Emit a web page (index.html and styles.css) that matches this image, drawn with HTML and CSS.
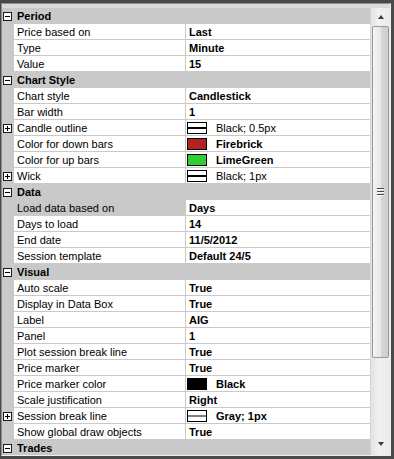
FILE: index.html
```html
<!DOCTYPE html>
<html>
<head>
<meta charset="utf-8">
<link rel="stylesheet" href="styles.css">
</head>
<body>
<div class="window">
  <div class="inner">
    <div class="grid">
      <div class="row cat"><span class="gutter"><span class="box minus"></span></span><span class="catname">Period</span></div>
      <div class="row"><span class="gutter"></span><span class="name">Price based on</span><span class="value">Last</span></div>
      <div class="row"><span class="gutter"></span><span class="name">Type</span><span class="value">Minute</span></div>
      <div class="row"><span class="gutter"></span><span class="name">Value</span><span class="value">15</span></div>

      <div class="row cat"><span class="gutter"><span class="box minus"></span></span><span class="catname">Chart Style</span></div>
      <div class="row"><span class="gutter"></span><span class="name">Chart style</span><span class="value">Candlestick</span></div>
      <div class="row"><span class="gutter"></span><span class="name">Bar width</span><span class="value">1</span></div>
      <div class="row"><span class="gutter"><span class="box plus"></span></span><span class="name">Candle outline</span><span class="value swv"><span class="swatch stroke"></span><span class="regular">Black; 0.5px</span></span></div>
      <div class="row"><span class="gutter"></span><span class="name">Color for down bars</span><span class="value swv"><span class="swatch firebrick"></span>Firebrick</span></div>
      <div class="row"><span class="gutter"></span><span class="name">Color for up bars</span><span class="value swv"><span class="swatch limegreen"></span>LimeGreen</span></div>
      <div class="row"><span class="gutter"><span class="box plus"></span></span><span class="name">Wick</span><span class="value swv"><span class="swatch stroke"></span><span class="regular">Black; 1px</span></span></div>

      <div class="row cat"><span class="gutter"><span class="box minus"></span></span><span class="catname">Data</span></div>
      <div class="row selected"><span class="gutter"></span><span class="name">Load data based on</span><span class="value">Days</span></div>
      <div class="row"><span class="gutter"></span><span class="name">Days to load</span><span class="value">14</span></div>
      <div class="row"><span class="gutter"></span><span class="name">End date</span><span class="value">11/5/2012</span></div>
      <div class="row"><span class="gutter"></span><span class="name">Session template</span><span class="value">Default 24/5</span></div>

      <div class="row cat"><span class="gutter"><span class="box minus"></span></span><span class="catname">Visual</span></div>
      <div class="row"><span class="gutter"></span><span class="name">Auto scale</span><span class="value">True</span></div>
      <div class="row"><span class="gutter"></span><span class="name">Display in Data Box</span><span class="value">True</span></div>
      <div class="row"><span class="gutter"></span><span class="name">Label</span><span class="value">AIG</span></div>
      <div class="row"><span class="gutter"></span><span class="name">Panel</span><span class="value">1</span></div>
      <div class="row"><span class="gutter"></span><span class="name">Plot session break line</span><span class="value">True</span></div>
      <div class="row"><span class="gutter"></span><span class="name">Price marker</span><span class="value">True</span></div>
      <div class="row"><span class="gutter"></span><span class="name">Price marker color</span><span class="value swv"><span class="swatch black"></span>Black</span></div>
      <div class="row"><span class="gutter"></span><span class="name">Scale justification</span><span class="value">Right</span></div>
      <div class="row"><span class="gutter"><span class="box plus"></span></span><span class="name">Session break line</span><span class="value swv"><span class="swatch stroke gray"></span>Gray; 1px</span></div>
      <div class="row"><span class="gutter"></span><span class="name">Show global draw objects</span><span class="value">True</span></div>

      <div class="row cat"><span class="gutter"><span class="box minus"></span></span><span class="catname">Trades</span></div>
    </div>
    <div class="scroll">
      <div class="btn"><span class="arrow up"></span></div>
      <div class="thumb"><span class="grip"></span></div>
      <div class="track"></div>
      <div class="btn down-btn"><span class="arrow down"></span></div>
    </div>
  </div>
</div>
</body>
</html>
```

FILE: styles.css
```css
html, body {
  margin: 0;
  padding: 0;
  background: #ffffff;
}

.window {
  width: 394px;
  height: 459px;
  box-sizing: border-box;
  border-style: solid;
  border-color: #4a4a4a;
  border-width: 3px 3px 3px 1px;
  overflow: hidden;
}

.inner {
  height: 100%;
  box-sizing: border-box;
  border-style: solid;
  border-width: 1px;
  border-color: #8e8e8e #eeeeee #eeeeee #8e8e8e;
  padding-top: 4px;
  background: #dadada;
  display: flex;
  font-family: "Liberation Sans", Arial, sans-serif;
  font-size: 11px;
  color: #000;
}

.grid {
  width: 368px;
  height: 447px;
  overflow: hidden;
  background: #ffffff;
}

.row {
  display: grid;
  grid-template-columns: 12px 171px 1fr;
  height: 16px;
  box-sizing: border-box;
  border-bottom: 1px solid #c9c9c9;
  white-space: nowrap;
}

.name, .value, .catname {
  line-height: 17px;
  height: 15px;
  overflow: hidden;
}

.gutter {
  background: #c9c9c9;
  position: relative;
}

.name {
  padding-left: 3px;
  background: #ffffff;
}

.selected .name {
  background: #c9c9c9;
}

.value {
  border-left: 1px solid #c9c9c9;
  padding-left: 3px;
  font-weight: bold;
}

.swv {
  padding-left: 1px;
  display: flex;
  align-items: center;
  line-height: 15px;
  padding-top: 1px;
  box-sizing: border-box;
}

.regular {
  font-weight: normal;
}

.cat {
  background: #c9c9c9;
}

.catname {
  grid-column: 2 / 4;
  padding-left: 3px;
  font-weight: bold;
}

.box {
  position: absolute;
  left: 1px;
  top: 4px;
  width: 9px;
  height: 9px;
  box-sizing: border-box;
  border: 1px solid #1a1a1a;
  background: #ffffff;
}

.box::before {
  content: "";
  position: absolute;
  left: 1px;
  top: 3px;
  width: 5px;
  height: 1px;
  background: #000;
}

.box.plus::after {
  content: "";
  position: absolute;
  left: 3px;
  top: 1px;
  width: 1px;
  height: 5px;
  background: #000;
}

.swatch {
  display: inline-block;
  width: 20px;
  height: 12px;
  box-sizing: border-box;
  border: 1px solid #000;
  margin-right: 9px;
  margin-top: -1px;
  flex: none;
  position: relative;
}

.firebrick { background: #b22222; }
.limegreen { background: #32cd32; }
.black { background: #000000; }

.stroke {
  background: #ffffff;
}

.stroke::after {
  content: "";
  position: absolute;
  left: 0;
  right: 0;
  top: 4px;
  height: 2px;
  background: #000;
}

.stroke.gray::after {
  background: #808080;
}

.scroll {
  width: 20px;
  height: 447px;
  box-sizing: border-box;
  border-left: 1px solid #d6d6d6;
  background: linear-gradient(to right, #e2e2e2, #f1f1f1 40%, #ececec);
  display: flex;
  flex-direction: column;
}

.btn {
  height: 17px;
  flex: none;
  display: flex;
  align-items: center;
  justify-content: center;
}

.down-btn {
  margin-bottom: 3px;
}

.arrow {
  width: 0;
  height: 0;
  border-left: 3.5px solid transparent;
  border-right: 3.5px solid transparent;
}

.arrow.up {
  border-bottom: 4px solid #3c3c3c;
}

.arrow.down {
  border-top: 4px solid #3c3c3c;
}

.thumb {
  height: 332px;
  margin: 1px 1px 0 1px;
  flex: none;
  box-sizing: border-box;
  border: 1px solid #979797;
  border-radius: 2px;
  background: linear-gradient(to right, #f4f4f4, #e8e8e8 50%, #d6d6d6 51%, #cfcfcf);
  display: flex;
  align-items: center;
  justify-content: center;
}

.grip {
  width: 7px;
  height: 8px;
  background: repeating-linear-gradient(to bottom, #4a4a4a 0, #4a4a4a 1px, #f8f8f8 1px, #f8f8f8 2px, transparent 2px, transparent 3px);
}

.track {
  flex: 1;
}
```
